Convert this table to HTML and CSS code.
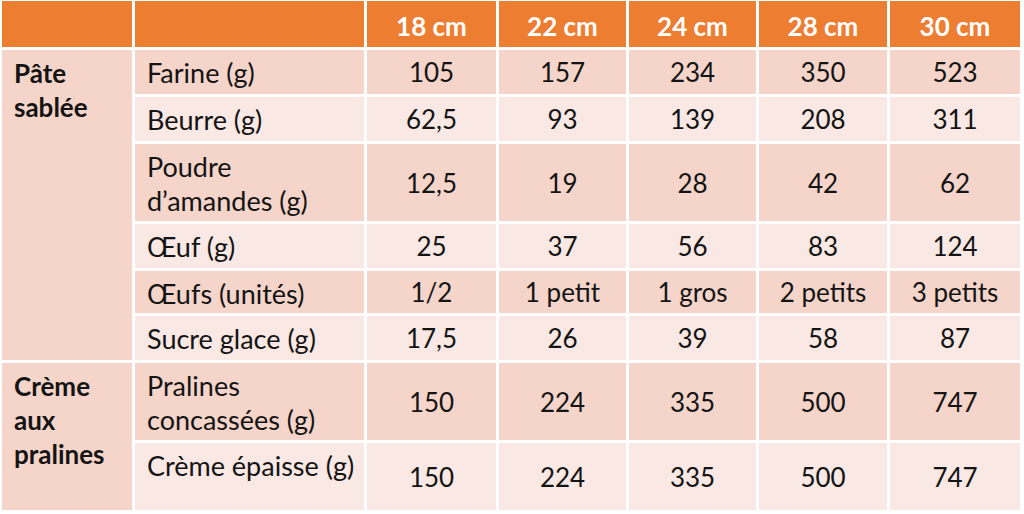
FILE: index.html
```html
<!DOCTYPE html>
<html lang="fr">
<head>
<meta charset="utf-8">
<title>Proportions</title>
<link rel="stylesheet" href="styles.css">
</head>
<body>
<div class="table">
  <div class="c hd"></div>
  <div class="c hd"></div>
  <div class="c hd num">18 cm</div>
  <div class="c hd num">22 cm</div>
  <div class="c hd num">24 cm</div>
  <div class="c hd num">28 cm</div>
  <div class="c hd num">30 cm</div>

  <div class="c grp span6">Pâte<br>sablée</div>
  <div class="c lbl dk">Farine (g)</div>
  <div class="c num dk">105</div><div class="c num dk">157</div><div class="c num dk">234</div><div class="c num dk">350</div><div class="c num dk">523</div>

  <div class="c lbl lt">Beurre (g)</div>
  <div class="c num lt">62,5</div><div class="c num lt">93</div><div class="c num lt">139</div><div class="c num lt">208</div><div class="c num lt">311</div>

  <div class="c lbl dk">Poudre<br>d’amandes (g)</div>
  <div class="c num dk">12,5</div><div class="c num dk">19</div><div class="c num dk">28</div><div class="c num dk">42</div><div class="c num dk">62</div>

  <div class="c lbl lt">Œuf (g)</div>
  <div class="c num lt">25</div><div class="c num lt">37</div><div class="c num lt">56</div><div class="c num lt">83</div><div class="c num lt">124</div>

  <div class="c lbl dk">Œufs (unités)</div>
  <div class="c num dk">1/2</div><div class="c num dk">1 petit</div><div class="c num dk">1 gros</div><div class="c num dk">2 petits</div><div class="c num dk">3 petits</div>

  <div class="c lbl lt">Sucre glace (g)</div>
  <div class="c num lt">17,5</div><div class="c num lt">26</div><div class="c num lt">39</div><div class="c num lt">58</div><div class="c num lt">87</div>

  <div class="c grp span2">Crème<br>aux<br>pralines</div>
  <div class="c lbl dk">Pralines<br>concassées (g)</div>
  <div class="c num dk">150</div><div class="c num dk">224</div><div class="c num dk">335</div><div class="c num dk">500</div><div class="c num dk">747</div>

  <div class="c lbl lt">Crème épaisse (g)</div>
  <div class="c num lt">150</div><div class="c num lt">224</div><div class="c num lt">335</div><div class="c num lt">500</div><div class="c num lt">747</div>
</div>
</body>
</html>
```

FILE: styles.css
```css
html, body {
  margin: 0;
  padding: 0;
  background: #ffffff;
}
body {
  padding: 1px 0 0 2px;
  font-family: Lato, "Carlito", "Open Sans", sans-serif;
  font-size: 26px;
  line-height: 34px;
  color: #141414;
}
.table {
  display: grid;
  width: 1018px;
  grid-template-columns: 130px 229px 129px 127px 127px 128px 130px;
  grid-template-rows: 46px 44px 44px 77px 44px 42px 44px 77px 67px;
  gap: 3px;
}
.c {
  box-sizing: border-box;
}
.hd {
  background: #ed7d31;
  color: #ffffff;
  font-weight: bold;
}
.hd.num {
  padding-top: 4px;
}
.num {
  display: flex;
  align-items: center;
  justify-content: center;
  text-align: center;
}
.dk { background: #f5d5ca; }
.lt { background: #f9e8e3; }
.grp {
  background: #f5d4c9;
  font-weight: bold;
  padding: 6px 0 0 12px;
}
.span6 { grid-row: span 6; }
.span2 { grid-row: span 2; }
.lbl {
  grid-column: 2;
  padding: 6px 0 0 12px;
  font-size: 27px;
}
```
